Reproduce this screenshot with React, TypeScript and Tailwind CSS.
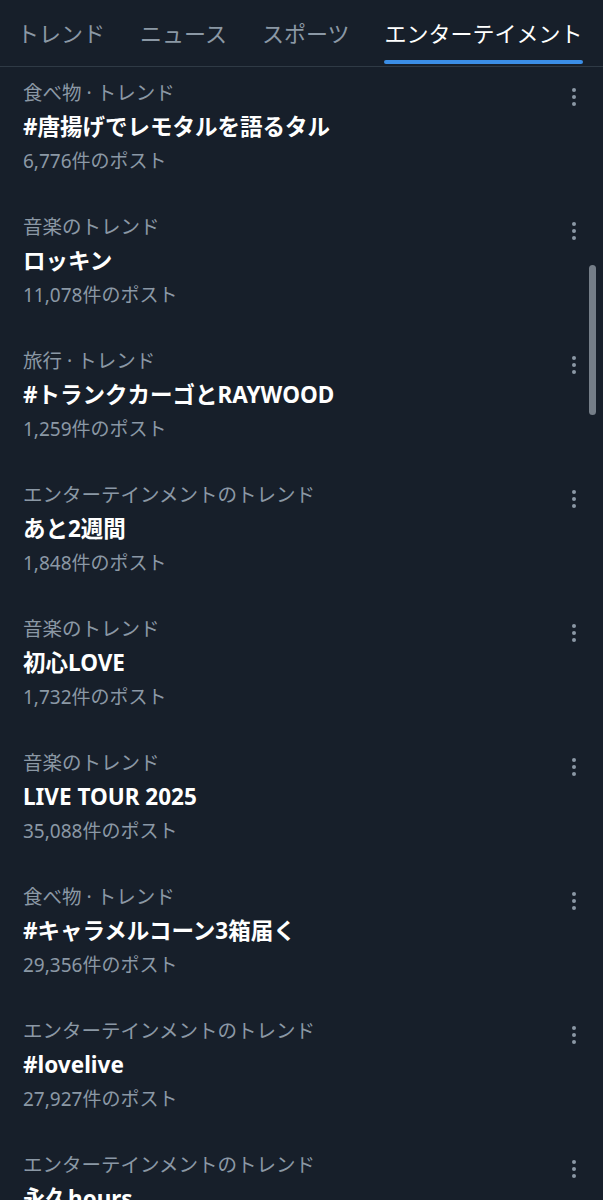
const trends = [
  { cat: "食べ物 · トレンド", title: "#唐揚げでレモタルを語るタル", count: "6,776件のポスト" },
  { cat: "音楽のトレンド", title: "ロッキン", count: "11,078件のポスト" },
  { cat: "旅行 · トレンド", title: "#トランクカーゴとRAYWOOD", count: "1,259件のポスト" },
  { cat: "エンターテインメントのトレンド", title: "あと2週間", count: "1,848件のポスト" },
  { cat: "音楽のトレンド", title: "初心LOVE", count: "1,732件のポスト" },
  { cat: "音楽のトレンド", title: "LIVE TOUR 2025", count: "35,088件のポスト" },
  { cat: "食べ物 · トレンド", title: "#キャラメルコーン3箱届く", count: "29,356件のポスト" },
  { cat: "エンターテインメントのトレンド", title: "#lovelive", count: "27,927件のポスト" },
  { cat: "エンターテインメントのトレンド", title: "永久hours", count: "12,004件のポスト" },
];

const tabs = ["トレンド", "ニュース", "スポーツ", "エンターテイメント"];

function Dots() {
  return (
    <div className="flex flex-col items-center gap-[3px] pt-[4px]">
      <span className="h-[4px] w-[4px] rounded-full bg-[#8b98a5]" />
      <span className="h-[4px] w-[4px] rounded-full bg-[#8b98a5]" />
      <span className="h-[4px] w-[4px] rounded-full bg-[#8b98a5]" />
    </div>
  );
}

export default function App() {
  return (
    <div
      className="relative h-[1200px] w-[603px] overflow-hidden bg-[#171f2a] text-white"
      style={{ fontFamily: '"Noto Sans", "Noto Sans CJK JP", sans-serif' }}
    >
      <div className="flex h-[67px] border-b border-[#2f3a45] pl-[17px]">
        {tabs.map((t, i) => (
          <div key={t} className={"relative flex items-center " + (i < 3 ? "mr-[35px]" : "")}>
            <span className={"text-[22px] " + (i === 3 ? "text-white" : "text-[#8b98a5]")}>{t}</span>
            {i === 3 && (
              <span className="absolute bottom-[2px] left-0 right-0 h-[4px] rounded-full bg-[#3b8ee6]" />
            )}
          </div>
        ))}
      </div>

      {trends.map((tr, i) => (
        <div key={i} className="flex pb-[23px] pl-[23px] pr-[23px] pt-[9px]">
          <div className="flex-1">
            <div className="text-[19.5px] leading-[34px] text-[#8b98a5]">{tr.cat}</div>
            <div className="text-[22.5px] font-bold leading-[34px] text-white">{tr.title}</div>
            <div className="text-[19px] leading-[34px] text-[#8b98a5]">{tr.count}</div>
          </div>
          <div className="pt-[8px] pr-[4px]">
            <Dots />
          </div>
        </div>
      ))}

      <div className="absolute left-[589px] top-[265px] h-[150px] w-[7px] rounded-full bg-[#757e88]" />
    </div>
  );
}
